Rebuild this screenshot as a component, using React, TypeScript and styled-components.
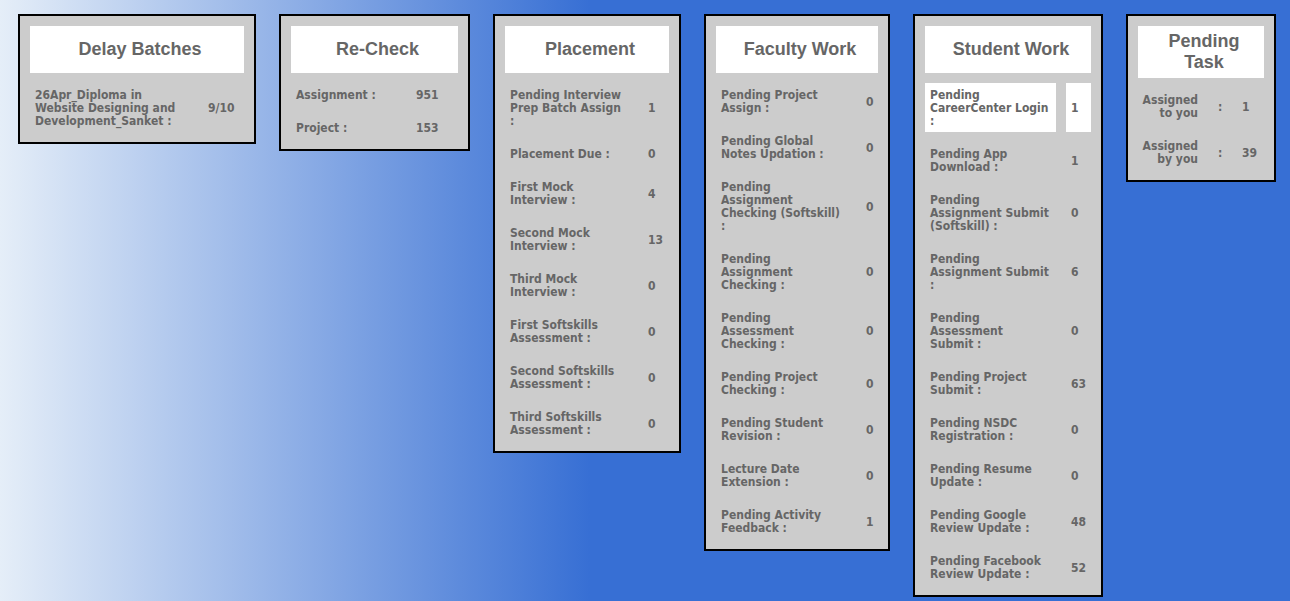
import React from 'react';
import styled, { createGlobalStyle } from 'styled-components';

const GlobalStyle = createGlobalStyle`
  html, body {
    margin: 0;
    padding: 0;
  }
  body {
    min-height: 100vh;
    background: linear-gradient(to right, #e5eef8 0px, #376fd4 590px, #376fd4 100%);
    font-family: "DejaVu Sans Condensed", "DejaVu Sans", sans-serif;
  }
`;

const Board = styled.div`
  display: flex;
  align-items: flex-start;
  gap: 23px;
  padding: 14px 18px;
`;

const Card = styled.div<{ $width: number }>`
  box-sizing: border-box;
  width: ${(p) => p.$width}px;
  background: #cccccc;
  border: 2px solid #000;
  padding: 10px;
  display: flex;
  flex-direction: column;
  gap: 10px;
`;

const Title = styled.div`
  box-sizing: border-box;
  min-height: 47px;
  padding: 5px 8px 5px 14px;
  background: #fff;
  display: flex;
  align-items: center;
  justify-content: center;
  text-align: center;
  font-family: "Liberation Sans", Arial, sans-serif;
  font-weight: bold;
  font-size: 18px;
  line-height: 21px;
  color: #666;
`;

const Rows = styled.div<{ $cols: string }>`
  display: grid;
  grid-template-columns: ${(p) => p.$cols};
  column-gap: 10px;
  row-gap: 10px;
`;

const Cell = styled.div<{ $white?: boolean; $right?: boolean }>`
  padding: 6px 5px 4px;
  display: flex;
  align-items: center;
  justify-content: ${(p) => (p.$right ? 'flex-end' : 'flex-start')};
  text-align: ${(p) => (p.$right ? 'right' : 'left')};
  white-space: pre;
  background: ${(p) => (p.$white ? '#fff' : 'transparent')};
  font-size: 12px;
  font-weight: bold;
  line-height: 13px;
  color: #666;
`;

type Row = [string, string, boolean?];

interface Panel {
  title: string;
  width: number;
  cols: string;
  rows: Row[];
}

const panels: Panel[] = [
  {
    title: 'Delay Batches',
    width: 238,
    cols: '163px 41px',
    rows: [['26Apr_Diploma in\nWebsite Designing and\nDevelopment_Sanket :', '9/10']],
  },
  {
    title: 'Re-Check',
    width: 191,
    cols: '110px 47px',
    rows: [
      ['Assignment :', '951'],
      ['Project :', '153'],
    ],
  },
  {
    title: 'Placement',
    width: 188,
    cols: '128px 26px',
    rows: [
      ['Pending Interview\nPrep Batch Assign\n:', '1'],
      ['Placement Due :', '0'],
      ['First Mock\nInterview :', '4'],
      ['Second Mock\nInterview :', '13'],
      ['Third Mock\nInterview :', '0'],
      ['First Softskills\nAssessment :', '0'],
      ['Second Softskills\nAssessment :', '0'],
      ['Third Softskills\nAssessment :', '0'],
    ],
  },
  {
    title: 'Faculty Work',
    width: 186,
    cols: '135px 17px',
    rows: [
      ['Pending Project\nAssign :', '0'],
      ['Pending Global\nNotes Updation :', '0'],
      ['Pending\nAssignment\nChecking (Softskill)\n:', '0'],
      ['Pending\nAssignment\nChecking :', '0'],
      ['Pending\nAssessment\nChecking :', '0'],
      ['Pending Project\nChecking :', '0'],
      ['Pending Student\nRevision :', '0'],
      ['Lecture Date\nExtension :', '0'],
      ['Pending Activity\nFeedback :', '1'],
    ],
  },
  {
    title: 'Student Work',
    width: 190,
    cols: '131px 25px',
    rows: [
      ['Pending\nCareerCenter Login\n:', '1', true],
      ['Pending App\nDownload :', '1'],
      ['Pending\nAssignment Submit\n(Softskill) :', '0'],
      ['Pending\nAssignment Submit\n:', '6'],
      ['Pending\nAssessment\nSubmit :', '0'],
      ['Pending Project\nSubmit :', '63'],
      ['Pending NSDC\nRegistration :', '0'],
      ['Pending Resume\nUpdate :', '0'],
      ['Pending Google\nReview Update :', '48'],
      ['Pending Facebook\nReview Update :', '52'],
    ],
  },
];

const tasks: Row[] = [
  ['Assigned\nto you', '1'],
  ['Assigned\nby you', '39'],
];

const App: React.FC = () => (
  <>
    <GlobalStyle />
    <Board>
      {panels.map((panel) => (
        <Card key={panel.title} $width={panel.width}>
          <Title>{panel.title}</Title>
          <Rows $cols={panel.cols}>
            {panel.rows.map(([label, value, white]) => (
              <React.Fragment key={label}>
                <Cell $white={white}>{label}</Cell>
                <Cell $white={white}>{value}</Cell>
              </React.Fragment>
            ))}
          </Rows>
        </Card>
      ))}
      <Card $width={150}>
        <Title>Pending Task</Title>
        <Rows $cols="65px 14px 27px">
          {tasks.map(([label, value]) => (
            <React.Fragment key={label}>
              <Cell $right>{label}</Cell>
              <Cell>:</Cell>
              <Cell>{value}</Cell>
            </React.Fragment>
          ))}
        </Rows>
      </Card>
    </Board>
  </>
);

export default App;
